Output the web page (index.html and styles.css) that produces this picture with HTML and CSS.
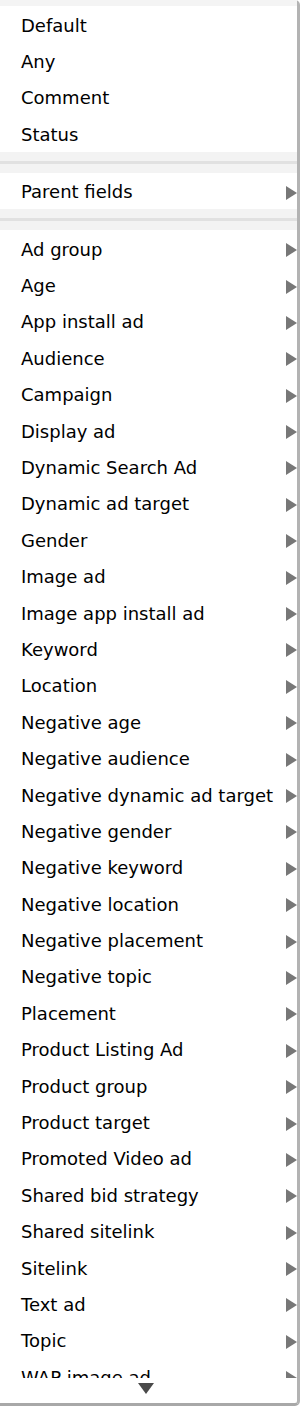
FILE: index.html
```html
<!DOCTYPE html>
<html>
<head>
<meta charset="utf-8">
<link rel="stylesheet" href="styles.css">
</head>
<body>
<div class="menu">
  <div class="viewport">
    <div class="top-strip"></div>
    <div class="item">Default</div>
    <div class="item">Any</div>
    <div class="item">Comment</div>
    <div class="item">Status</div>
    <div class="sep"></div>
    <div class="item sub">Parent fields</div>
    <div class="sep"></div>
    <div class="item sub">Ad group</div>
    <div class="item sub">Age</div>
    <div class="item sub">App install ad</div>
    <div class="item sub">Audience</div>
    <div class="item sub">Campaign</div>
    <div class="item sub">Display ad</div>
    <div class="item sub">Dynamic Search Ad</div>
    <div class="item sub">Dynamic ad target</div>
    <div class="item sub">Gender</div>
    <div class="item sub">Image ad</div>
    <div class="item sub">Image app install ad</div>
    <div class="item sub">Keyword</div>
    <div class="item sub">Location</div>
    <div class="item sub">Negative age</div>
    <div class="item sub">Negative audience</div>
    <div class="item sub">Negative dynamic ad target</div>
    <div class="item sub">Negative gender</div>
    <div class="item sub">Negative keyword</div>
    <div class="item sub">Negative location</div>
    <div class="item sub">Negative placement</div>
    <div class="item sub">Negative topic</div>
    <div class="item sub">Placement</div>
    <div class="item sub">Product Listing Ad</div>
    <div class="item sub">Product group</div>
    <div class="item sub">Product target</div>
    <div class="item sub">Promoted Video ad</div>
    <div class="item sub">Shared bid strategy</div>
    <div class="item sub">Shared sitelink</div>
    <div class="item sub">Sitelink</div>
    <div class="item sub">Text ad</div>
    <div class="item sub">Topic</div>
    <div class="item sub">WAP image ad</div>
  </div>
  <div class="scroller">
    <svg width="16" height="11" viewBox="0 0 16 11"><polygon points="0,0 16,0 8,11" fill="#4a4a4a"/></svg>
  </div>
</div>
</body>
</html>
```
FILE: styles.css
```css
html, body {
  margin: 0;
  padding: 0;
  background: #ffffff;
}
.menu {
  width: 300px;
  height: 1406px;
  box-sizing: border-box;
  border-right: 3px solid #b3b3b3;
  border-bottom: 3px solid #a8a8a8;
  border-top-right-radius: 5px;
  border-bottom-right-radius: 5px;
  background: #ffffff;
  display: flex;
  flex-direction: column;
  font-family: "DejaVu Sans", "Liberation Sans", sans-serif;
  font-size: 18px;
  color: #000;
}
.viewport {
  height: 1378px;
  overflow: hidden;
  flex: none;
}
.top-strip {
  height: 6px;
  background: #f4f4f4;
}
.item {
  height: 36.4px;
  box-sizing: border-box;
  padding-top: 2px;
  display: flex;
  align-items: center;
  padding-left: 21px;
  position: relative;
  white-space: nowrap;
}
.item.sub::after {
  content: "";
  position: absolute;
  right: 0;
  top: 50%;
  margin-top: -5px;
  border-left: 11px solid #777777;
  border-top: 7px solid transparent;
  border-bottom: 7px solid transparent;
}
.sep {
  height: 21px;
  background: #f3f3f3;
  display: flex;
  align-items: center;
}
.sep::before {
  content: "";
  display: block;
  width: 100%;
  height: 3px;
  background: #e1e1e1;
}
.scroller {
  flex: 1;
  display: flex;
  justify-content: center;
  align-items: flex-start;
  padding-top: 5px;
  padding-right: 6px;
}
```
